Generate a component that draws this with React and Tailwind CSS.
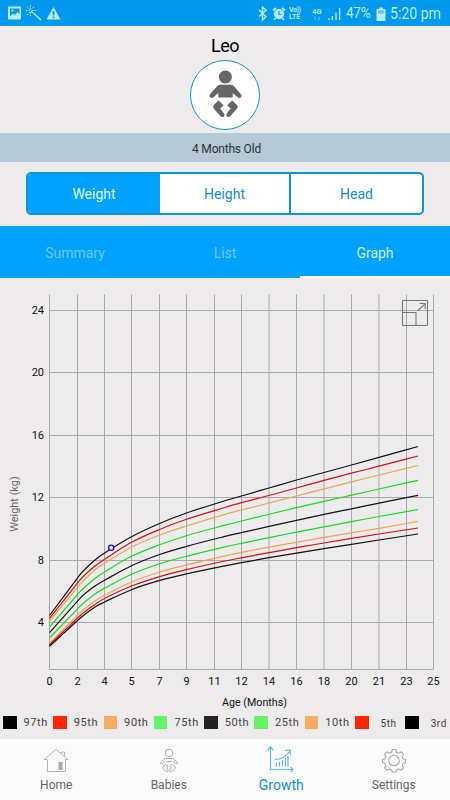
import React from "react";

const FONT = "font-['Roboto','Liberation_Sans',sans-serif]";

const gridX = [49.5, 77.5, 104.5, 131.5, 159.5, 186.5, 214.5, 241.5, 269, 296.5, 324, 351.5, 379, 406.5, 433.5];
const months = [0, 2, 4, 5, 7, 9, 11, 12, 14, 16, 18, 20, 21, 23, 25];
const gridY = [
  [24, 310.5],
  [20, 372.5],
  [16, 435.5],
  [12, 497.5],
  [8, 560.5],
  [4, 622.5],
];

const curveX = [49.5, 80, 95, 104.5, 131.5, 159, 186.5, 225, 241.5, 269, 296.5, 324, 351.5, 379, 418];
const curves = [
  { color: "#111111", y: [615.5, 574.7, 560, 553, 536.7, 523.7, 513, 500.7, 496, 488, 480, 472.5, 465, 457.4, 446.5] },
  { color: "#d80f14", y: [618.3, 580, 566, 559.3, 542.3, 529.7, 519.3, 507.5, 502.7, 495.5, 488, 480.4, 473.2, 466.2, 456] },
  { color: "#eda552", y: [621, 584.3, 570, 563.3, 547.3, 535.3, 526, 514.3, 510, 503, 496, 488.8, 481.8, 475, 465.5] },
  { color: "#14dc1c", y: [627, 591.7, 578.5, 572, 556.3, 545, 535.7, 525.2, 521, 514.3, 507.7, 501.3, 495.2, 489, 480.3] },
  { color: "#111111", y: [632.7, 598.3, 586, 580.3, 565.7, 554.7, 546.3, 536.4, 532.6, 526.4, 520.4, 514.4, 508.8, 503.2, 495.3] },
  { color: "#14dc1c", y: [638, 606.3, 594, 588.3, 574.3, 564, 556.3, 546.9, 543.3, 537.6, 532.2, 526.8, 521.7, 516.5, 509.5] },
  { color: "#eda552", y: [643.3, 612.7, 601, 595.3, 582, 572.2, 564.9, 555.8, 552.3, 547.2, 542.3, 537.4, 532.8, 528.3, 521.4] },
  { color: "#d80f14", y: [644.7, 615.7, 604.5, 598.5, 586, 576.8, 569.6, 561, 557.8, 552.7, 547.7, 543, 538.4, 534, 528] },
  { color: "#111111", y: [646.3, 618.3, 607, 602, 589.7, 580.7, 573.9, 565.8, 562.7, 557.7, 553.2, 548.7, 544.3, 540, 534] },
];

const legend = [
  ["97th", "#000000"],
  ["95th", "#ff2600"],
  ["90th", "#f6ad62"],
  ["75th", "#66f36b"],
  ["50th", "#222326"],
  ["25th", "#66f36b"],
  ["10th", "#f6ad62"],
  ["5th", "#ff2600"],
  ["3rd", "#000000"],
];

// straight first segment, then a Catmull-Rom spline
function curvePath(ys) {
  const p = curveX.map((x, i) => [x, ys[i]]);
  let d = `M${p[0]} L${p[1]}`;
  for (let i = 1; i < p.length - 1; i++) {
    const [a, b, c] = [p[i - 1], p[i], p[i + 1]];
    const e = p[i + 2] || c;
    // tangents are scaled by x so uneven spacing doesn't overshoot
    const m1 = (c[1] - a[1]) / (c[0] - a[0]);
    const m2 = (e[1] - b[1]) / (e[0] - b[0]);
    const h = (c[0] - b[0]) / 3;
    d += ` C${b[0] + h},${b[1] + m1 * h} ${c[0] - h},${c[1] - m2 * h} ${c}`;
  }
  return d;
}

function StatusBar() {
  return (
    <div className="flex h-[26px] items-center bg-[#0099ee] pl-2 pr-[9px] text-[#b9ecff]">
      <svg width="54" height="16" viewBox="0 0 54 16">
        <path fillRule="evenodd" fill="currentColor" d="M1 1.5h11a1 1 0 0 1 1 1v11a1 1 0 0 1-1 1H1a1 1 0 0 1-1-1v-11a1 1 0 0 1 1-1zM2 3.5v8l3-3 2 1.5 2.500-3 2 2V3.500z" />
        <circle cx="4.500" cy="5.500" r="1" fill="currentColor" />
        <path stroke="currentColor" strokeWidth="1.500" d="M23 6l10 9" />
        <path stroke="currentColor" strokeWidth=".9" strokeDasharray="1.600 1" d="M22.500 0v4M18 5.500h4M19 1.500l3 3M19 10l3-3M22.500 7v4M26 2l-2.500 2.500M24 5.500h4" />
        <path fillRule="evenodd" fill="currentColor" d="M45.500 2l7 12.500h-14zM44.700 6v4.500h1.700V6zM44.700 11.500v1.700h1.700v-1.700z" />
      </svg>
      <div className="ml-auto flex items-center pt-[2px]">
        <svg width="30" height="16" viewBox="0 0 30 16" fill="none" stroke="currentColor">
          <path strokeWidth="1.500" d="M2 4l7 6.500-3.500 3.500V1L9 4.300 2 10.500" />
          <circle cx="22" cy="8" r="4.700" fill="currentColor" />
          <path strokeWidth="1.200" stroke="#0099ee" d="M22 5V8.500h2.500" />
          <path strokeWidth="1.500" d="M18.500 12L17 14M25.500 12l1.500 2" />
          <path strokeWidth="2" d="M16 4.500l3-2.500M25 2l3 2.500" />
        </svg>
        <div className="ml-[2px] w-[17px] text-[7px] font-bold leading-[7px]">
          <div className="whitespace-nowrap tracking-[-0.4px]">Vo))</div>
          <div>LTE</div>
        </div>
        <div className="ml-[5px] flex w-[12px] flex-col items-center text-[7.5px] font-bold leading-[8px]">
          <span>4G</span>
          <svg width="8" height="5" viewBox="0 0 8 5" fill="none" stroke="currentColor" strokeWidth=".8" opacity=".5">
            <path d="M2 4.500V1M.8 2L2 .8 3.200 2M6 .5V4M4.800 3L6 4.200 7.200 3" />
          </svg>
        </div>
        <svg className="ml-[4px]" width="15" height="14" viewBox="0 0 15 14" stroke="currentColor" strokeWidth="1.300">
          <path d="M2 11v2M5.300 9v4M9 5.500V13M12.700 1v12" />
        </svg>
        <span className="ml-[4px] w-[26px] whitespace-nowrap text-[15.5px] leading-none tracking-[-0.3px]">
          <span className="inline-block origin-left scale-x-[0.87]">47%</span>
        </span>
        <svg className="ml-[4px]" width="10" height="14" viewBox="0 0 10 14" fill="currentColor">
          <path d="M3 .5h4V2h2.500v12H.5V2H3z" />
          <path fill="#62bdf2" d="M2 3.500h6v3H2z" />
        </svg>
        <span className="ml-[4px] w-[51px] whitespace-nowrap text-[16px] leading-none">
          <span className="inline-block origin-left scale-x-[0.88]">5:20 pm</span>
        </span>
      </div>
    </div>
  );
}

function Profile() {
  return (
    <div className="flex h-[107px] flex-col items-center">
      <div className="mt-[8px] h-[24px] text-[18px] leading-[24px] tracking-[-0.5px] text-black">Leo</div>
      <div className="mt-[2px] flex h-[70px] w-[70px] items-center justify-center rounded-full border border-[#1593d3] bg-white">
        <svg width="36" height="50" viewBox="0 0 36 50" fill="#666666">
          <circle cx="18.400" cy="7" r="6.500" />
          <path d="M13.500 14.700h10q2 0 3.200 1.300l7.300 8.200q1.500 2-.2 3.300-1.600 1-3.200-.3L25.700 23v4.500H11.300V23l-4.900 4.200q-1.600 1.300-3.200.3-1.700-1.300-.2-3.300L10.300 16q1.200-1.300 3.200-1.300z" />
          <path d="M11.500 30.500l5.200 4.700-3.500 3.300 4 5.200q1.100 2.200-.6 3.100-1.700.8-3.200-.7L6.700 38.600q-1.300-1.800 0-3.300zM25.300 30.500l-5.200 4.700 3.500 3.300-4 5.200q-1.100 2.200.6 3.100 1.700.8 3.200-.7l6.700-7.500q1.300-1.800 0-3.300z" />
        </svg>
      </div>
    </div>
  );
}

function Segments() {
  return (
    <div className="mx-[26px] mt-[10px] flex h-[43px] overflow-hidden rounded-[5px] border-2 border-[#0c93d8] bg-white text-[14px] text-[#118fce]">
      <div className="flex w-[132px] items-center justify-center bg-[#00a2ff] pt-[2px] text-[#e4f6ff]">Weight</div>
      <div className="flex w-[131px] items-center justify-center border-r-2 border-[#0c93d8] pt-[2px]">Height</div>
      <div className="flex flex-1 items-center justify-center pt-[2px]">Head</div>
    </div>
  );
}

function Tabs() {
  return (
    <div className="mt-[11px] grid h-[52px] grid-cols-3 bg-[#00a2ff] text-[14px] text-[#6fcaf8]">
      <div className="flex items-center justify-center pt-[2px]">Summary</div>
      <div className="flex items-center justify-center pt-[2px]">List</div>
      <div className="flex items-center justify-center border-b-2 border-white pt-[4px] text-[#d4f1ff]">Graph</div>
    </div>
  );
}

function Chart() {
  return (
    <svg className="block" width="450" height="432" viewBox="0 278 450 432" fill="none">
      <g stroke="#aaa9aa" strokeWidth="1">
        {gridX.map((x) => (
          <path key={x} d={`M${x} 294.500V669.500`} />
        ))}
        {gridY.map(([v, y]) => (
          <path key={v} d={`M49.500 ${y}H433.500`} />
        ))}
        <path d="M49.500 669.500H433.500" />
      </g>
      {curves.map((c, i) => (
        <path key={i} d={curvePath(c.y)} stroke={c.color} strokeWidth="1.200" />
      ))}
      <circle cx="111.200" cy="547.800" r="2.600" fill="#ecebec" stroke="#1410c8" strokeWidth="1.300" />
      <g fill="#111" fontSize="11" textAnchor="middle">
        {gridX.map((x, i) => (
          <text key={x} x={x} y="684.500">{months[i]}</text>
        ))}
      </g>
      <g fill="#111" fontSize="11" textAnchor="end">
        {gridY.map(([v, y]) => (
          <text key={v} x="44" y={y + 3}>{v}</text>
        ))}
      </g>
      <text x="254.500" y="706" fontSize="10.700" fill="#111" textAnchor="middle">Age (Months)</text>
      <text transform="translate(17.500 504) rotate(-90)" fontSize="10.900" fill="#666" textAnchor="middle">Weight (kg)</text>
      <g stroke="#777" strokeWidth="1.100">
        <rect x="402.500" y="300.500" width="25" height="25" rx=".5" />
        <path d="M402.500 312.500H416V325.500M417.500 311L425 303.800M419.500 303.500H425.200V309" />
      </g>
    </svg>
  );
}

function Legend() {
  return (
    <div className="flex h-[29px] pl-[3px] pt-[5px]">
      {legend.map(([label, color]) => (
        <div key={label} className="flex h-[14px] w-[50.3px] shrink-0 items-center">
          <span className="h-[13px] w-[13.500px] shrink-0" style={{ backgroundColor: color }} />
          <span
            className={
              label.length === 3
                ? "flex-1 pl-[3px] pt-[2px] text-center text-[10px] tracking-[0.5px] text-[#444]"
                : "flex-1 pl-[7px] pt-[2px] text-[11px] tracking-[0.6px] text-[#444]"
            }
          >
            {label}
          </span>
        </div>
      ))}
    </div>
  );
}

function HomeIcon() {
  return (
    <svg width="26" height="26" viewBox="0 0 26 26" fill="none" stroke="#b4b4b4" strokeWidth="1">
      <path d="M4.500 11.500V23.500H22.500V11.500M1 11.500L13 1.500 25 11.500H22M1 11.500h3.500M18.500 6V4h3v4.500" />
      <path fill="#a8a8a8" stroke="none" d="M15.500 14h4V22h-4z" />
    </svg>
  );
}

function BabyIcon() {
  return (
    <svg width="26" height="26" viewBox="0 0 26 26" fill="none" stroke="#a8a8a8" strokeWidth="1">
      <circle cx="13" cy="5" r="3.800" />
      <path d="M10.500 13.500h5M9.500 10.500h7q1.200.3 2 1.200l2.500 2.500q.8 1.300-.2 1.800-.7.300-1.500-.4L17 13.700M9.500 10.500q-1.200.3-2 1.200L5 14.200q-.8 1.300.2 1.800.7.300 1.500-.4L9 13.700" />
      <path d="M9.500 16.500l2.500 2-1.200 1.700 1.300 2q.4 1.300-.8 1.500-1 0-1.800-.8L7 20.500q-.6-1 0-2zM16.500 16.500l-2.500 2 1.200 1.700-1.300 2q-.4 1.300.8 1.500 1 0 1.800-.8l2.500-2.400q.6-1 0-2z" />
    </svg>
  );
}

function GrowthIcon() {
  return (
    <svg width="28" height="26" viewBox="0 0 28 26" fill="none" stroke="#62b9e8" strokeWidth="1.200">
      <path d="M3.500 -1V21.500H26M.8 2L3.500 -1 6.200 2M23.500 19L26 21.500 23.500 24" />
      <path d="M9.500 15v3.500M12.500 14v4.500M15.500 12v6.500M18.500 10v8.500M21 8v10.500M8 11.500Q17.500 11.500 23 3M18 2.500l5-.5.500 5" />
    </svg>
  );
}

function GearIcon() {
  return (
    <svg width="26" height="26" viewBox="0 0 26 26" fill="none" stroke="#a8a8a8" strokeWidth="1.100" strokeLinejoin="round">
      <circle cx="13" cy="12.500" r="5.300" />
      <path d="M11.300 1.500h3.400l.7 2.700 2.300 1 2.500-1.400 2.400 2.400-1.400 2.500 1 2.300 2.300.5v3l-2.300.8-1 2.300 1.300 2.200-2.400 2.400-2.400-1.300-2.300 1-.7 2.100h-3.400l-.7-2.100-2.300-1-2.400 1.300-2.400-2.400 1.300-2.200-1-2.300-2.300-.8v-3l2.300-.5 1-2.300-1.400-2.500 2.400-2.400 2.500 1.400 2.300-1z" />
    </svg>
  );
}

function NavItem({ icon, label, active }) {
  return (
    <div className="flex flex-col items-center pt-[9px] [&>svg]:overflow-visible">
      {icon}
      <span
        className={
          active
            ? "mt-[2px] text-[14px] leading-[18px] text-[#118fce]"
            : "mt-[2px] text-[12px] leading-[18px] text-[#666]"
        }
      >
        {label}
      </span>
    </div>
  );
}

function App() {
  return (
    <div className={`flex h-[800px] w-[450px] flex-col overflow-hidden bg-[#edebec] ${FONT}`}>
      <StatusBar />
      <Profile />
      <div className="flex h-[29px] items-center justify-center bg-[#b5cad6] pl-[3px] pt-[2px] text-[12px] tracking-[-0.2px] text-[#2c3338]">
        4 Months Old
      </div>
      <Segments />
      <Tabs />
      <Chart />
      <Legend />
      <div className="grid h-[61px] grid-cols-4 bg-[#fbfbfb]">
        <NavItem icon={<HomeIcon />} label="Home" />
        <NavItem icon={<BabyIcon />} label="Babies" />
        <NavItem icon={<GrowthIcon />} label="Growth" active />
        <NavItem icon={<GearIcon />} label="Settings" />
      </div>
    </div>
  );
}

export default App;
